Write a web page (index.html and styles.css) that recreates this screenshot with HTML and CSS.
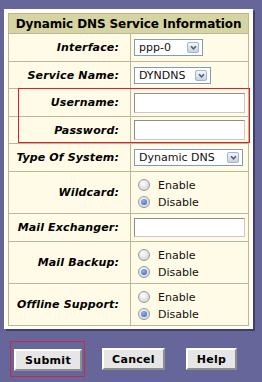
FILE: index.html
```html
<!DOCTYPE html>
<html lang="en">
<head>
  <meta charset="UTF-8">
  <title>Dynamic DNS</title>
  <link rel="stylesheet" href="styles.css">
</head>
<body>
  <div class="panel">
    <div class="table-wrap">
      <table class="info">
        <tr>
          <th colspan="2">Dynamic DNS Service Information</th>
        </tr>
        <tr>
          <td class="label">Interface:</td>
          <td class="value">
            <span class="select select-iface"><span class="select-text">ppp-0</span><span class="arrow"><svg viewBox="0 0 9 9" width="9" height="9"><path d="M2 3.2 L4.5 5.8 L7 3.2" fill="none" stroke="#4d6185" stroke-width="1.6"/></svg></span></span>
          </td>
        </tr>
        <tr class="short">
          <td class="label">Service Name:</td>
          <td class="value">
            <span class="select select-service"><span class="select-text">DYNDNS</span><span class="arrow"><svg viewBox="0 0 9 9" width="9" height="9"><path d="M2 3.2 L4.5 5.8 L7 3.2" fill="none" stroke="#4d6185" stroke-width="1.6"/></svg></span></span>
          </td>
        </tr>
        <tr>
          <td class="label">Username:</td>
          <td class="value"><span class="text-input"></span></td>
        </tr>
        <tr class="short">
          <td class="label">Password:</td>
          <td class="value"><span class="text-input"></span></td>
        </tr>
        <tr>
          <td class="label">Type Of System:</td>
          <td class="value">
            <span class="select select-type"><span class="select-text">Dynamic DNS</span><span class="arrow"><svg viewBox="0 0 9 9" width="9" height="9"><path d="M2 3.2 L4.5 5.8 L7 3.2" fill="none" stroke="#4d6185" stroke-width="1.6"/></svg></span></span>
          </td>
        </tr>
        <tr>
          <td class="label">Wildcard:</td>
          <td class="value radios">
            <div class="radio-line"><span class="radio"></span>Enable</div>
            <div class="radio-line"><span class="radio checked"></span>Disable</div>
          </td>
        </tr>
        <tr>
          <td class="label">Mail Exchanger:</td>
          <td class="value"><span class="text-input short"></span></td>
        </tr>
        <tr>
          <td class="label">Mail Backup:</td>
          <td class="value radios">
            <div class="radio-line"><span class="radio"></span>Enable</div>
            <div class="radio-line"><span class="radio checked"></span>Disable</div>
          </td>
        </tr>
        <tr>
          <td class="label">Offline Support:</td>
          <td class="value radios">
            <div class="radio-line"><span class="radio"></span>Enable</div>
            <div class="radio-line"><span class="radio checked"></span>Disable</div>
          </td>
        </tr>
      </table>
      <div class="highlight"></div>
    </div>
  </div>

  <div class="buttons">
    <span class="btn-mark"><button class="btn btn-submit">Submit</button></span>
    <button class="btn btn-cancel">Cancel</button>
    <button class="btn btn-help">Help</button>
  </div>
</body>
</html>
```

FILE: styles.css
```css
* {
  margin: 0;
  padding: 0;
  box-sizing: border-box;
}

body {
  background: #67669b;
  font-family: 'DejaVu Sans', Verdana, sans-serif;
  font-size: 11px;
  color: #000;
  width: 262px;
  height: 382px;
  overflow: hidden;
}

.panel {
  margin: 9px 0 0 4px;
  width: 249px;
  padding: 3px 4px 3px 3px;
  background: #fffdf0;
  border-top: 1px solid #ffffff;
  border-left: 1px solid #ffffff;
  box-shadow: 2px 2px 0 #3f3e6a;
}

.table-wrap {
  position: relative;
}

.info {
  width: 241px;
  border-collapse: collapse;
  background: #fffbe6;
}

.info th {
  height: 20px;
  background: #d6d4a2;
  border: 1px solid #b9b89a;
  font-size: 12px;
  font-weight: bold;
  letter-spacing: -0.1px;
  text-align: center;
  padding: 0;
}

.info td {
  border: 1px solid #b9b89a;
  height: 28px;
  padding: 0;
}

.info tr.short td {
  height: 27px;
}

.label {
  width: 122px;
  text-align: right;
  padding-right: 11px !important;
  font-weight: bold;
  font-style: italic;
  font-size: 11px;
  letter-spacing: 0.15px;
}

.value {
  padding-left: 3px !important;
}

.select {
  display: flex;
  align-items: center;
  height: 17px;
  background: #fff;
  border: 1px solid #7f9db9;
  padding-left: 4px;
}

.select-text {
  flex: 1;
  font-size: 11px;
  color: #111;
  white-space: nowrap;
}

.arrow {
  width: 12px;
  height: 11px;
  margin-right: 3px;
  border: 1px solid #a8b4cc;
  border-radius: 2px;
  background: linear-gradient(#f4f6fa, #c9d1e0);
  display: flex;
  align-items: center;
  justify-content: center;
}

.select-iface {
  width: 69px;
}

.select-service {
  width: 77px;
}

.select-type {
  width: 109px;
}

.text-input {
  display: block;
  width: 111px;
  height: 20px;
  background: #fff;
  border: 1px solid #8d8d8d;
  border-right-color: #c8c8c8;
  border-bottom-color: #c8c8c8;
}

.text-input.short {
  height: 19px;
}

.info td.radios {
  height: 42px;
  padding-top: 2px;
}

.radio-line {
  display: flex;
  align-items: center;
  height: 17px;
  padding-left: 4px;
  font-size: 11px;
  color: #111;
}

.radio {
  width: 12px;
  height: 12px;
  border-radius: 50%;
  border: 1px solid #9a9aa0;
  background: radial-gradient(circle at 40% 35%, #ffffff, #d8d8d8 70%);
  margin-right: 8px;
  position: relative;
}

.radio.checked::after {
  content: "";
  position: absolute;
  left: 2px;
  top: 2px;
  width: 6px;
  height: 6px;
  border-radius: 50%;
  background: radial-gradient(circle at 40% 35%, #8fb4ee, #2f63c0);
}

.highlight {
  position: absolute;
  left: 10px;
  top: 75px;
  width: 232px;
  height: 55px;
  border: 1px solid #e0202e;
  z-index: 2;
  pointer-events: none;
}

.buttons {
  display: flex;
  align-items: center;
  margin-top: 12px;
  padding-left: 10px;
}

.btn-mark {
  display: block;
  border: 1px solid #c42a48;
  padding: 7px 2px 5px 3px;
}

.btn {
  height: 22px;
  background: #e6e6e6;
  border: 2px solid;
  border-color: #ffffff #8e8e8e #8e8e8e #ffffff;
  font-family: 'DejaVu Sans', Verdana, sans-serif;
  font-size: 11px;
  font-weight: bold;
  color: #000;
  letter-spacing: 0.3px;
}

.btn-submit {
  width: 68px;
}

.btn-cancel {
  width: 63px;
  margin-left: 17px;
}

.btn-help {
  width: 51px;
  margin-left: 21px;
}
```
